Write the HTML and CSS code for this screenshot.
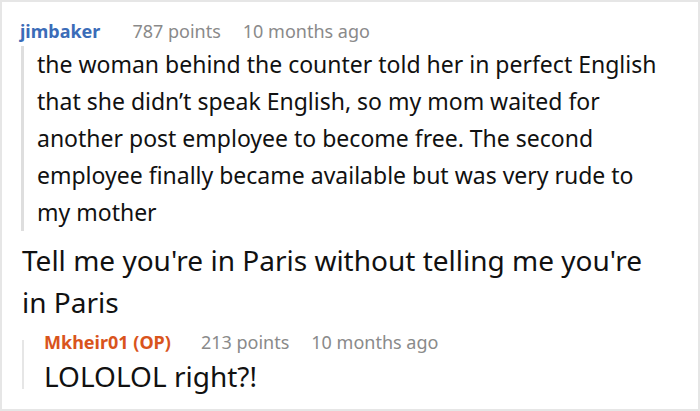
FILE: index.html
```html
<!DOCTYPE html>
<html>
<head>
<meta charset="utf-8">
<link rel="stylesheet" href="styles.css">
</head>
<body>
<div class="frame">
  <div class="comment">
    <div class="meta">
      <span class="user">jimbaker</span>
      <span class="info">787 points</span>
      <span class="info">10 months ago</span>
    </div>
    <div class="quote">the woman behind the counter told her in perfect English that she didn’t speak English, so my mom waited for another post employee to become free. The second employee finally became available but was very rude to my mother</div>
  </div>
  <div class="title">Tell me you're in Paris without telling me you're in Paris</div>
  <div class="reply">
    <div class="reply-bar"></div>
    <div class="reply-body">
      <div class="meta">
        <span class="user op">Mkheir01 (OP)</span>
        <span class="info">213 points</span>
        <span class="info">10 months ago</span>
      </div>
      <div class="reply-text">LOLOLOL right?!</div>
    </div>
  </div>
</div>
</body>
</html>
```
FILE: styles.css
```css
html, body {
  margin: 0;
  padding: 0;
  background: #fff;
}
.frame {
  box-sizing: border-box;
  width: 700px;
  height: 411px;
  border: 2px solid #e6e6e6;
  font-family: "Noto Sans", sans-serif;
  color: #111;
  padding: 16px 0 0 18px;
  overflow: hidden;
}
.meta {
  display: flex;
  align-items: baseline;
  gap: 22px;
  font-size: 18px;
  line-height: 26px;
}
.user {
  font-weight: bold;
  color: #3b6cb8;
  margin-right: 10px;
}
.user.op {
  color: #d9541c;
  margin-right: 8px;
}
.info {
  color: #8a8a8a;
}
.quote {
  margin: 2px 0 0 1px;
  border-left: 3px solid #dedede;
  padding: 0 33px 0 13px;
  font-size: 23px;
  line-height: 37px;
}
.title {
  margin: 8px 0 0 2px;
  font-size: 28px;
  line-height: 42px;
  padding-right: 40px;
}
.reply {
  display: flex;
  margin: 6px 0 0 2px;
}
.reply-bar {
  width: 2px;
  background: #e6e6e6;
  margin: 11px 0 4px;
}
.reply-body {
  padding-left: 20px;
}
.reply-text {
  font-size: 28px;
  line-height: 34px;
  margin-top: 4px;
}
```
